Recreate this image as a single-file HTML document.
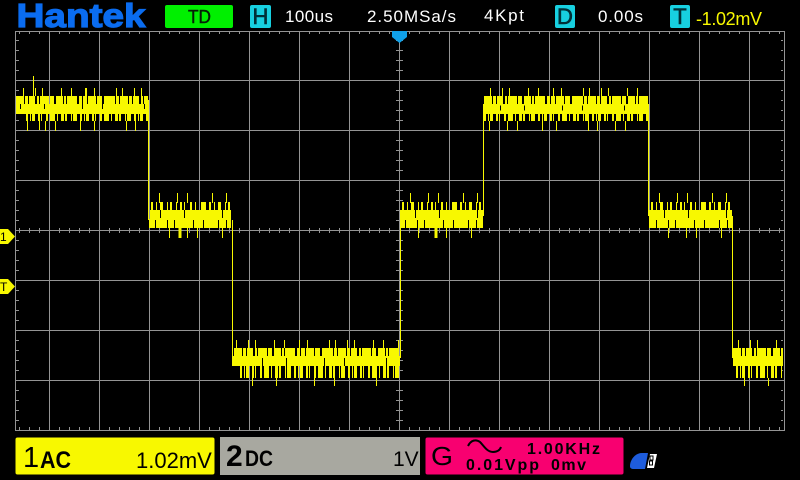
<!DOCTYPE html>
<html><head><meta charset="utf-8"><style>
html,body{margin:0;padding:0;background:#000;width:800px;height:480px;overflow:hidden}
svg{display:block}
text{font-family:"Liberation Sans",sans-serif}
.g{stroke:#949494;stroke-width:1;fill:none}
.y{stroke:#f8f800;fill:none}
.k{stroke:#000;fill:none}
.d1{stroke-dasharray:8 1 3 1 6 2 2 1 9 1 4 2 7 1 2 1 10 2 3 1 4 1 8 1 5 2 11 1 3 1}
.d2{stroke-dasharray:2 2 3 1 2 2 1 3 4 2 1 1 3 2 2 3 2 2 1 2 5 2 5 2 1 2 3 2}
.d3{stroke-dasharray:1 11 1 6 1 18 1 9 1 14 1 7 1 21 1 5}
.d4{stroke-dasharray:1 17 1 9 1 24 1 13 1 31 1 8}
.d5{stroke-dasharray:1 23 1 37 1 19 1 41}
.d6{stroke-dasharray:2 3 1 3 3 4 1 2 2 4 1 3 2 2 1 5 2 3 1 5 5 3}
.d7{stroke-dasharray:2 2 1 1 3 3 2 1 1 4 2 2 5 2 1 3 3 1 2 4 1 1 4 3}
</style></head><body>
<svg width="800" height="480" viewBox="0 0 800 480" xmlns="http://www.w3.org/2000/svg">
<defs>
<pattern id="tt" width="10" height="4" patternUnits="userSpaceOnUse" x="19" y="31"><rect x="0" width="1" height="3" fill="#949494"/></pattern>
<pattern id="ll" width="4" height="10" patternUnits="userSpaceOnUse" x="16" y="40"><rect y="0" width="3" height="1" fill="#949494"/></pattern>
</defs>
<rect width="800" height="480" fill="#000"/>

<!-- ticks -->
<rect x="19" y="32" width="765" height="3" fill="url(#tt)"/>
<rect x="19" y="427" width="765" height="3" fill="url(#tt)"/>
<rect x="16" y="40" width="3" height="390" fill="url(#ll)"/>
<rect x="781" y="40" width="3" height="390" fill="url(#ll)"/>
<rect x="19" y="228" width="765" height="5" fill="url(#tt)"/>
<rect x="396" y="40" width="7" height="390" fill="url(#ll)"/>

<!-- grid -->
<path class="g" d="M15.5 31.5H784.5V430.5H15.5Z"/>
<path class="g" d="M49.5 31V430M99.5 31V430M149.5 31V430M199.5 31V430M249.5 31V430M299.5 31V430M349.5 31V430M399.5 31V430M449.5 31V430M499.5 31V430M549.5 31V430M599.5 31V430M649.5 31V430M699.5 31V430M749.5 31V430"/>
<path class="g" d="M16 80.5H784M16 130.5H784M16 180.5H784M16 230.5H784M16 280.5H784M16 330.5H784M16 380.5H784"/>

<!-- waveform: high -->
<g>
<rect x="16" y="104" width="132" height="10" fill="#f8f800"/>
<path class="y d1" stroke-width="8" d="M16 100H148"/>
<path class="y d7" stroke-width="7" d="M26 117.5H148"/>
<path class="y d3" stroke-width="8" d="M23 92H148"/>
<path class="y d4" stroke-width="10" d="M27 126H148"/>
<path class="y" stroke-width="1" d="M33.5 76V96M39.5 114V130M85.5 88V96"/>
<path class="k d5" stroke-width="5" d="M20 106.5H148"/>

<rect x="484" y="104" width="164" height="10" fill="#f8f800"/>
<path class="y d1" stroke-width="8" d="M484 100H648"/>
<path class="y d7" stroke-width="7" d="M484 117.5H648"/>
<path class="y d3" stroke-width="8" d="M490 92H648"/>
<path class="y d4" stroke-width="10" d="M489 126H648"/>
<path class="k d5" stroke-width="5" d="M500 108H648"/>
</g>

<!-- waveform: mid -->
<g>
<rect x="150" y="210" width="81" height="9" fill="#f8f800"/>
<rect x="149" y="219" width="82" height="9" fill="#f8f800"/>
<path class="y d6" stroke-width="8" d="M151 206H231"/>
<path class="y d4" stroke-width="10" d="M159 198H231"/>
<path class="y d4" stroke-width="10" d="M169 233H231"/>
<path class="y" stroke-width="3" d="M180 228V238"/>
<path class="k d3" stroke-width="8" d="M155 224H231"/>
<path class="k d5" stroke-width="8" d="M160 214H231"/>

<rect x="400" y="210" width="83" height="9" fill="#f8f800"/>
<rect x="401" y="219" width="82" height="9" fill="#f8f800"/>
<path class="y d6" stroke-width="8" d="M402 206H483"/>
<path class="y d4" stroke-width="10" d="M410 198H483"/>
<path class="y d4" stroke-width="10" d="M418 233H483"/>
<path class="y" stroke-width="3" d="M436 228V238"/>
<path class="k d3" stroke-width="8" d="M405 224H483"/>
<path class="k d5" stroke-width="8" d="M415 214H483"/>

<rect x="649" y="210" width="83" height="9" fill="#f8f800"/>
<rect x="649" y="219" width="83" height="9" fill="#f8f800"/>
<path class="y d6" stroke-width="8" d="M651 206H732"/>
<path class="y d4" stroke-width="10" d="M659 198H732"/>
<path class="y d4" stroke-width="10" d="M668 233H732"/>
<path class="k d3" stroke-width="8" d="M656 224H732"/>
<path class="k d5" stroke-width="8" d="M664 214H732"/>
</g>

<!-- waveform: low -->
<g>
<rect x="232" y="356" width="168" height="10" fill="#f8f800"/>
<path class="y d1" stroke-width="8" d="M234 352H400"/>
<path class="y d7" stroke-width="12" d="M240 372H400"/>
<path class="y d3" stroke-width="8" d="M236 344H400"/>
<path class="y d5" stroke-width="8" d="M252 382H400"/>
<path class="k d5" stroke-width="8" d="M262 362H400"/>

<rect x="733" y="356" width="50" height="10" fill="#f8f800"/>
<path class="y d1" stroke-width="8" d="M733 352H783"/>
<path class="y d7" stroke-width="12" d="M736 372H783"/>
<path class="y d3" stroke-width="8" d="M738 344H783"/>
<path class="y d5" stroke-width="8" d="M744 382H783"/>
</g>

<!-- verticals -->
<path class="y" stroke-width="1" d="M148.5 100V220M232.5 220V358M400.5 358V216M483.5 216V104M648.5 104V216M732.5 216V358"/>

<!-- markers -->
<path d="M392 31H407V37L399.5 43L392 37Z" fill="#10a0e8"/>
<path d="M0 229H8L15 236.5L8 244H0Z" fill="#f8f800"/>
<path d="M0 279H8L15 286.5L8 294H0Z" fill="#f8f800"/>
<text x="0" y="241" font-size="12" fill="#000">1</text>
<text x="0" y="291" font-size="12" fill="#000">T</text>

<!-- header -->
<text x="16.5" y="27" font-size="33" font-weight="bold" fill="#0a6cf0" stroke="#0a6cf0" stroke-width="1.2" textLength="129" lengthAdjust="spacingAndGlyphs">Hantek</text>
<rect x="165" y="5" width="68" height="23" rx="2" fill="#00f000"/>
<text x="188" y="23" font-size="18" fill="#062006" stroke="#062006" stroke-width=".4" textLength="23" lengthAdjust="spacingAndGlyphs">TD</text>
<rect x="250" y="5" width="21" height="23" rx="2" fill="#17d0e0"/>
<text x="260.5" y="24" font-size="22" fill="#003038" stroke="#003038" stroke-width=".6" text-anchor="middle">H</text>
<text x="285" y="22" font-size="17" fill="#fff" textLength="48" lengthAdjust="spacing">100us</text>
<text x="367" y="22" font-size="17" fill="#fff" textLength="89" lengthAdjust="spacing">2.50MSa/s</text>
<text x="484" y="21" font-size="17" fill="#fff" textLength="40" lengthAdjust="spacing">4Kpt</text>
<rect x="555" y="5" width="20" height="23" rx="2" fill="#17d0e0"/>
<text x="565" y="24" font-size="22" fill="#003038" stroke="#003038" stroke-width=".6" text-anchor="middle">D</text>
<text x="598" y="22" font-size="17" fill="#fff" textLength="45" lengthAdjust="spacing">0.00s</text>
<rect x="670" y="5" width="20" height="23" rx="2" fill="#17d0e0"/>
<text x="680" y="24" font-size="22" fill="#003038" stroke="#003038" stroke-width=".6" text-anchor="middle">T</text>
<text x="696" y="25" font-size="18" fill="#f8f800" textLength="66" lengthAdjust="spacing">-1.02mV</text>

<!-- footer -->
<rect x="15.5" y="437.5" width="199" height="37" rx="2" fill="#f8f800"/>
<text x="23" y="467" font-size="29" fill="#000">1</text>
<text x="40" y="468" font-size="24" font-weight="bold" fill="#000" textLength="31" lengthAdjust="spacingAndGlyphs">AC</text>
<text x="136" y="468" font-size="22" fill="#000">1.02mV</text>

<rect x="220" y="437" width="200" height="38" fill="#a8a8a0"/>
<text x="226" y="466" font-size="30" font-weight="bold" fill="#000">2</text>
<text x="245" y="466" font-size="22" font-weight="bold" fill="#000" textLength="28" lengthAdjust="spacingAndGlyphs">DC</text>
<text x="393" y="466" font-size="21" fill="#000">1V</text>

<rect x="425.5" y="437.5" width="198" height="37" rx="2" fill="#f80070"/>
<text x="431" y="465" font-size="26" fill="#000" textLength="22" lengthAdjust="spacingAndGlyphs">G</text>
<path d="M468 446C471 440 476 439 480 442C484 446 487 452 493 452C497 452 500 450 501 447" fill="none" stroke="#000" stroke-width="2"/>
<text x="527" y="454" font-size="16" font-weight="bold" fill="#000" textLength="73" lengthAdjust="spacing">1.00KHz</text>
<text x="466" y="470" font-size="16" font-weight="bold" fill="#000" textLength="73" lengthAdjust="spacing">0.01Vpp</text>
<text x="551" y="470" font-size="16" font-weight="bold" fill="#000" textLength="35" lengthAdjust="spacing">0mv</text>

<path d="M630 466C630 460 635 453 642 453H648L645 469H634C631 469 630 468 630 466Z" fill="#1e5cdc"/>
<path d="M650 454H657L654 468H647Z" fill="#fff"/>
<rect x="650" y="456" width="3" height="4" fill="none" stroke="#000" stroke-width="1"/>
<rect x="649.5" y="461" width="3" height="4" fill="none" stroke="#000" stroke-width="1"/>
</svg>
</body></html>
